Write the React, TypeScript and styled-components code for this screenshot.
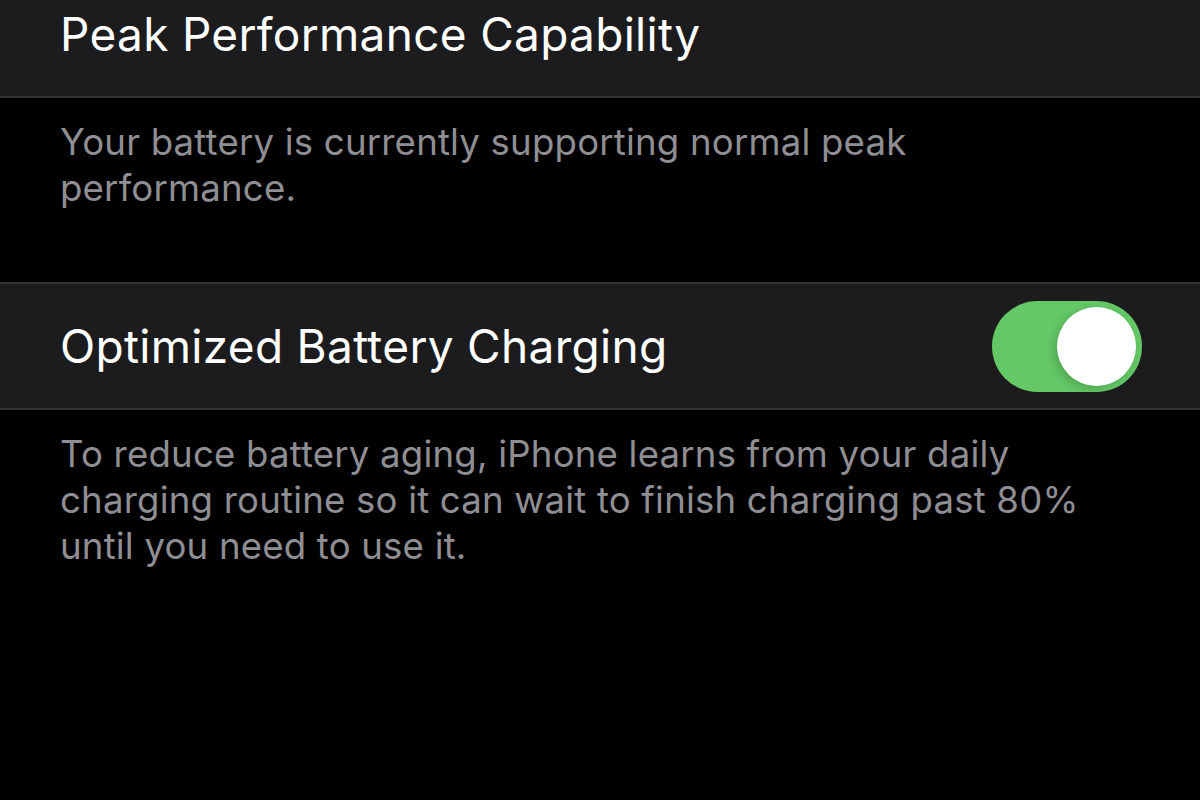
import React from "react";
import styled, { createGlobalStyle } from "styled-components";

const GlobalStyle = createGlobalStyle`
  html, body {
    margin: 0;
    padding: 0;
    background: #000;
  }
  body {
    font-family: Inter, "Noto Sans", sans-serif;
    -webkit-font-smoothing: antialiased;
  }
`;

const Screen = styled.div`
  width: 1200px;
  height: 800px;
  background: #000;
  overflow: hidden;
  display: flex;
  flex-direction: column;
`;

const Cell = styled.div<{ $height: number; $top?: boolean }>`
  height: ${(p) => p.$height}px;
  background: #1c1c1e;
  border-bottom: 2px solid #333335;
  border-top: ${(p) => (p.$top ? "2px solid #333335" : "none")};
  display: flex;
  align-items: center;
  justify-content: space-between;
  padding: 0 58px 0 60px;
  box-sizing: content-box;
`;

const CellTitle = styled.div<{ $offset?: number }>`
  color: #fff;
  font-size: 46px;
  letter-spacing: 0.3px;
  margin-top: ${(p) => p.$offset ?? 0}px;
`;

const Footer = styled.div<{ $height: number }>`
  height: ${(p) => p.$height}px;
  padding: 21px 60px 0;
  box-sizing: border-box;
  color: #8e8e93;
  font-size: 36.6px;
  line-height: 46px;
  letter-spacing: 0.2px;
`;

const Toggle = styled.div<{ $on: boolean }>`
  width: 150px;
  height: 91px;
  border-radius: 46px;
  background: ${(p) => (p.$on ? "#63c865" : "#39393d")};
  display: flex;
  align-items: center;
  justify-content: ${(p) => (p.$on ? "flex-end" : "flex-start")};
  padding: 0 6px;
  box-sizing: border-box;
`;

const Knob = styled.div`
  width: 79px;
  height: 79px;
  border-radius: 50%;
  background: #fff;
  box-shadow: -3px 3px 8px rgba(0, 0, 0, 0.18);
`;

export default function App() {
  return (
    <>
      <GlobalStyle />
      <Screen>
        <Cell $height={96}>
          <CellTitle $offset={-28}>Peak Performance Capability</CellTitle>
        </Cell>
        <Footer $height={184}>
          Your battery is currently supporting normal peak
          <br />
          performance.
        </Footer>
        <Cell $height={124} $top>
          <CellTitle>Optimized Battery Charging</CellTitle>
          <Toggle $on>
            <Knob />
          </Toggle>
        </Cell>
        <Footer $height={390}>
          To reduce battery aging, iPhone learns from your daily
          <br />
          charging routine so it can wait to finish charging past 80%
          <br />
          until you need to use it.
        </Footer>
      </Screen>
    </>
  );
}
